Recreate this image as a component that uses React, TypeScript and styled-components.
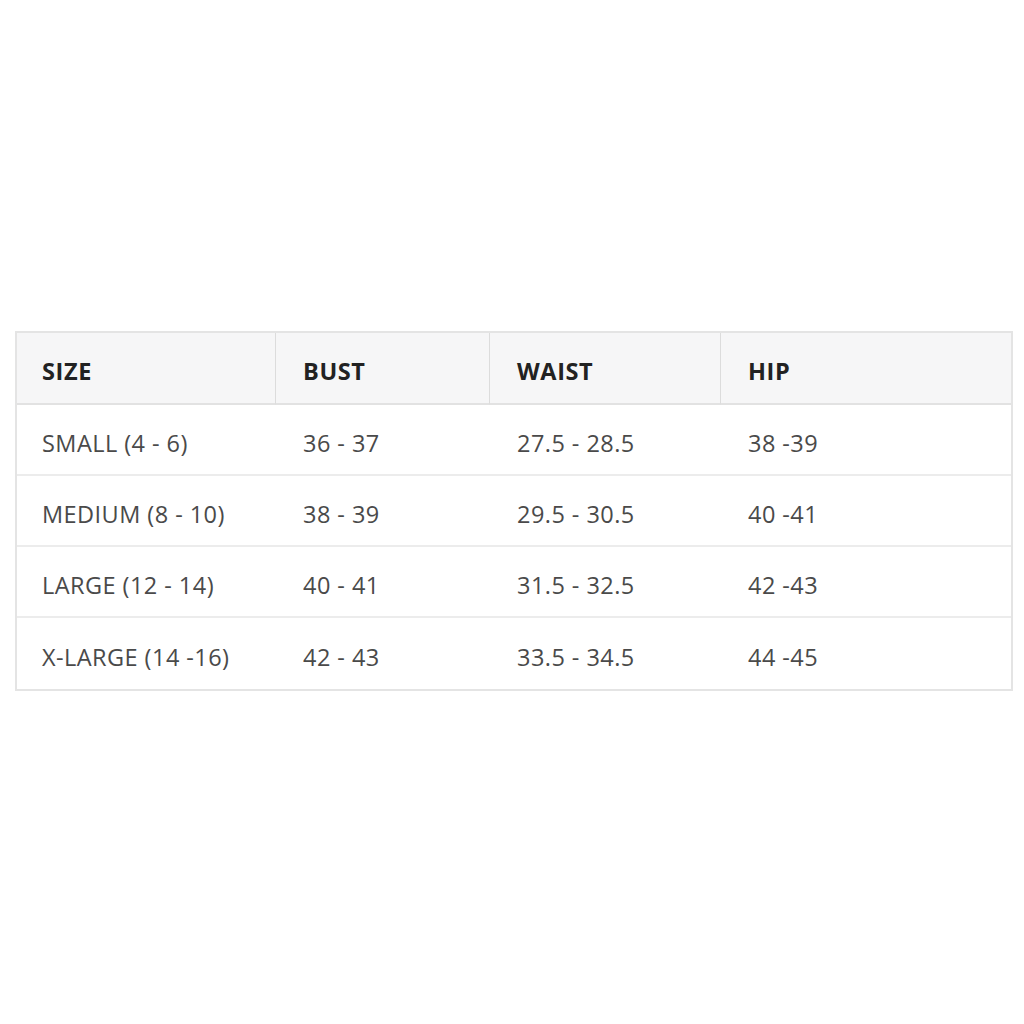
import React from "react";
import styled, { createGlobalStyle } from "styled-components";

const Global = createGlobalStyle`
  html, body { margin: 0; padding: 0; background: #ffffff; }
  body { font-family: "Open Sans", "Noto Sans", "Liberation Sans", sans-serif; }
`;

const Page = styled.div`
  width: 1024px;
  height: 1024px;
  box-sizing: border-box;
  padding: 331px 11px 0 15px;
  background: #ffffff;
`;

const Table = styled.div`
  width: 998px;
  border: 2px solid #e4e4e4;
  box-sizing: border-box;
  display: grid;
  grid-template-columns: 259px 214px 231px 1fr;
`;

const HeadCell = styled.div<{ $last?: boolean; $first?: boolean }>`
  height: 72px;
  display: flex;
  align-items: center;
  padding: 6px 0 0 ${(p) => (p.$first ? "25px" : "27px")};
  background: #f6f6f7;
  border-right: ${(p) => (p.$last ? "none" : "1px solid #dcdcdc")};
  border-bottom: 2px solid #e2e2e2;
  font-weight: 700;
  font-size: 23.5px;
  letter-spacing: 0.6px;
  color: #222222;
  box-sizing: border-box;
`;

const Cell = styled.div<{ $lastRow?: boolean; $first?: boolean }>`
  height: 71px;
  display: flex;
  align-items: center;
  padding: 7px 0 0 ${(p) => (p.$first ? "25px" : "27px")};
  border-bottom: ${(p) => (p.$lastRow ? "none" : "2px solid #ececec")};
  font-size: 23.5px;
  letter-spacing: 0.45px;
  color: #4a4a4a;
  box-sizing: border-box;
`;

const headers = ["SIZE", "BUST", "WAIST", "HIP"];
const rows = [
  ["SMALL (4 - 6)", "36 - 37", "27.5 - 28.5", "38 -39"],
  ["MEDIUM (8 - 10)", "38 - 39", "29.5 - 30.5", "40 -41"],
  ["LARGE (12 - 14)", "40 - 41", "31.5 - 32.5", "42 -43"],
  ["X-LARGE (14 -16)", "42 - 43", "33.5 - 34.5", "44 -45"],
];

export default function App() {
  return (
    <>
      <Global />
      <Page>
        <Table>
          {headers.map((h, i) => (
            <HeadCell key={h} $first={i === 0} $last={i === headers.length - 1}>
              {h}
            </HeadCell>
          ))}
          {rows.map((r, ri) =>
            r.map((c, ci) => (
              <Cell key={`${ri}-${ci}`} $first={ci === 0} $lastRow={ri === rows.length - 1}>
                {c}
              </Cell>
            ))
          )}
        </Table>
      </Page>
    </>
  );
}
